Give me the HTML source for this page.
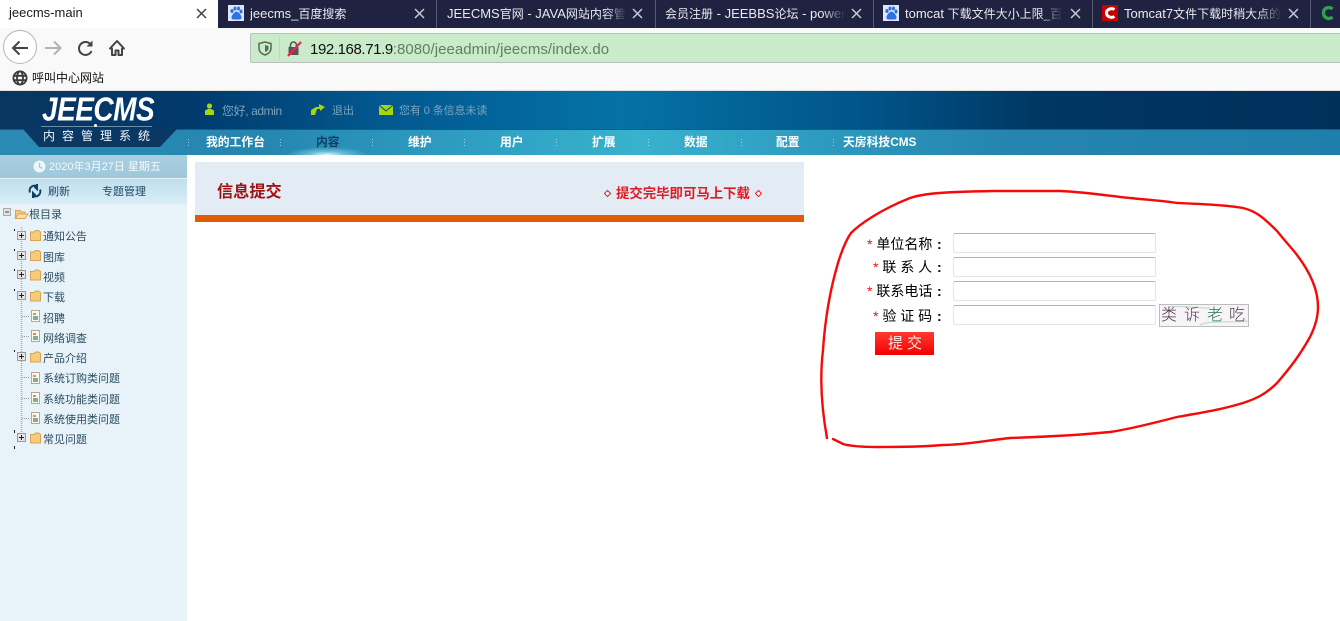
<!DOCTYPE html>
<html><head><meta charset="utf-8"><style>
html,body{margin:0;padding:0;width:1340px;height:621px;overflow:hidden;background:#fff}
body{position:relative;font-family:"Liberation Sans","Noto Sans CJK SC",sans-serif}
.a,.t{position:absolute;white-space:nowrap}
.t{line-height:16px}
svg{position:absolute;overflow:visible}
.tab{position:absolute;top:0;height:28px;overflow:hidden;color:#e9e9ef;font-size:13px;line-height:27px;white-space:nowrap;background:#1f2240}
.tab b{font-weight:normal;font-size:12px}
.fade{position:absolute;top:0;width:22px;height:28px;background:linear-gradient(90deg,rgba(31,34,64,0),#1f2240)}
.div{position:absolute;top:0;width:1px;height:28px;background:#5a5b72}
.tree{position:absolute;left:43px;font-size:11px;line-height:14px;color:#2c4d60;white-space:nowrap}
.nav{position:absolute;top:134px;font-size:11.8px;font-weight:bold;line-height:16px;color:#fff;white-space:nowrap}
.sep{position:absolute;top:139px;width:1px;height:7px;opacity:.7;background:repeating-linear-gradient(180deg,#cfeaf3 0 1px,transparent 1px 3px)}
.inp{position:absolute;left:953px;width:201px;height:18px;border:1px solid #e2e5ea;border-top-color:#b4b4b4;border-radius:2px;background:#fff}
.lb{position:absolute;font-size:14px;line-height:18px;color:#000;white-space:nowrap}
.co{position:absolute;left:937px;font-size:14px;line-height:18px;font-weight:bold;color:#000}
.st{color:#f01010}
.cp{position:absolute;top:1px;font-size:16px;line-height:20px;font-weight:300}
</style></head><body>

<!-- tab strip -->
<div class="a" style="left:0;top:0;width:1340px;height:28px;background:#1f2240"></div>
<div class="a" style="left:0;top:0;width:218px;height:28px;background:#fff"></div>
<div class="t" style="left:9px;top:5px;font-size:13px;color:#1a1a1a">jeecms-main</div>
<svg style="left:196px;top:8px" width="11" height="11"><path d="M1 1L10 10M10 1L1 10" stroke="#444" stroke-width="1.5"/></svg>

<div class="tab" style="left:250px;width:160px">jeecms_<b>百度搜索</b></div>
<div class="tab" style="left:447px;width:180px">JEECMS<b>官网</b> - JAVA<b>网站内容管理系统</b><div class="fade" style="right:0"></div></div>
<div class="tab" style="left:665px;width:180px"><b>会员注册</b> - JEEBBS<b>论坛</b> - powered by<div class="fade" style="right:0"></div></div>
<div class="tab" style="left:905px;width:158px">tomcat <b>下载文件大小上限_百度搜索</b><div class="fade" style="right:0"></div></div>
<div class="tab" style="left:1124px;width:158px">Tomcat7<b>文件下载时稍大点的就</b><div class="fade" style="right:0"></div></div>
<div class="div" style="left:436px"></div><div class="div" style="left:655px"></div><div class="div" style="left:873px"></div><div class="div" style="left:1092px"></div><div class="div" style="left:1310px"></div>

<svg style="left:414px;top:8px" width="11" height="11"><path d="M1 1L10 10M10 1L1 10" stroke="#c9c9d4" stroke-width="1.5"/></svg>
<svg style="left:632px;top:8px" width="11" height="11"><path d="M1 1L10 10M10 1L1 10" stroke="#c9c9d4" stroke-width="1.5"/></svg>
<svg style="left:851px;top:8px" width="11" height="11"><path d="M1 1L10 10M10 1L1 10" stroke="#c9c9d4" stroke-width="1.5"/></svg>
<svg style="left:1070px;top:8px" width="11" height="11"><path d="M1 1L10 10M10 1L1 10" stroke="#c9c9d4" stroke-width="1.5"/></svg>
<svg style="left:1288px;top:8px" width="11" height="11"><path d="M1 1L10 10M10 1L1 10" stroke="#c9c9d4" stroke-width="1.5"/></svg>

<!-- favicons -->
<svg style="left:228px;top:5px" width="16" height="16"><rect width="16" height="16" fill="#fff"/><rect width="16" height="16" fill="#3c78e8" opacity=".18"/><g fill="#2f6fe6"><ellipse cx="4" cy="6" rx="1.6" ry="2"/><ellipse cx="7" cy="3.5" rx="1.5" ry="2"/><ellipse cx="10.5" cy="3.5" rx="1.5" ry="2"/><ellipse cx="13" cy="6.5" rx="1.5" ry="2"/><path d="M8.5 6.5C6 7 3 11 3.5 13C4 15 7 14.5 8.5 14.5C10 14.5 13 15 13.5 13C14 11 11 7 8.5 6.5Z"/></g></svg>
<svg style="left:883px;top:5px" width="16" height="16"><rect width="16" height="16" fill="#fff"/><rect width="16" height="16" fill="#3c78e8" opacity=".18"/><g fill="#2f6fe6"><ellipse cx="4" cy="6" rx="1.6" ry="2"/><ellipse cx="7" cy="3.5" rx="1.5" ry="2"/><ellipse cx="10.5" cy="3.5" rx="1.5" ry="2"/><ellipse cx="13" cy="6.5" rx="1.5" ry="2"/><path d="M8.5 6.5C6 7 3 11 3.5 13C4 15 7 14.5 8.5 14.5C10 14.5 13 15 13.5 13C14 11 11 7 8.5 6.5Z"/></g></svg>
<svg style="left:1102px;top:5px" width="16" height="16"><rect width="16" height="16" fill="#c80000"/><path d="M12.5 4.500C9 2.500 4.500 4.500 4.500 8C4.500 11.500 9 13.500 12.500 11.500" fill="none" stroke="#fff" stroke-width="3"/></svg>
<svg style="left:1321px;top:5px" width="14" height="16"><path d="M11.5 4C8 1 2.5 3 2.5 8C2.5 13 8 15 11.5 12" fill="none" stroke="#2aa34a" stroke-width="3.4"/></svg>

<!-- toolbar -->
<div class="a" style="left:0;top:28px;width:1340px;height:62px;background:#f9f9fa"></div>
<div class="a" style="left:250px;top:33px;width:1090px;height:28px;background:#c9ebca;border-top:1px solid #bdbdbd;border-bottom:1px solid #bdbdbd;border-left:1px solid #bdbdbd;border-radius:2px 0 0 2px"></div>
<div class="a" style="left:279px;top:36px;width:1px;height:24px;background:#b9d9ba"></div>

<div class="a" style="left:3px;top:30px;width:32px;height:32px;border:1px solid #b5b5b5;border-radius:50%;background:#fff"></div>
<svg style="left:0;top:28px" width="130" height="40">
<path d="M28 20H13M19.5 13.5L13 20L19.5 26.5" fill="none" stroke="#444" stroke-width="2"/>
<path d="M45 20H60M54 13.5L60.5 20L54 26.5" fill="none" stroke="#b4b4b4" stroke-width="2"/>
<path d="M91 17A6.5 6.5 0 1 0 91.5 23" fill="none" stroke="#444" stroke-width="2"/><path d="M92.5 12.5V18.5H86.5Z" fill="#444"/>
<path d="M117 13L110 20.5H112V27H115.5V22.5H118.5V27H122V20.5H124Z" fill="none" stroke="#444" stroke-width="2" stroke-linejoin="round"/>
</svg>
<svg style="left:258px;top:41px" width="14" height="15"><path d="M7 1L13 2.500V7C13 11 10 13 7 14C4 13 1 11 1 7V2.500Z" fill="none" stroke="#5a6a5a" stroke-width="1.5"/><path d="M7 4L10.500 5V7.500C10.500 9.500 8.500 10.500 7 11Z" fill="#5a6a5a"/></svg>
<svg style="left:287px;top:41px" width="15" height="15"><rect x="1.500" y="6" width="10" height="8" fill="#555"/><path d="M3.500 6V4A3 3 0 0 1 9.500 4V6" fill="none" stroke="#555" stroke-width="1.6"/><path d="M1 15L14 1" stroke="#e8254a" stroke-width="2.2"/></svg>
<div class="t" style="left:310px;top:41px;font-size:15px;line-height:18px;color:#5f7f62;letter-spacing:.04px"><span style="color:#111;letter-spacing:-.4px">192.168.71.9</span>:8080/jeeadmin/jeecms/index.do</div>

<svg style="left:12px;top:70px" width="16" height="16"><g fill="none" stroke="#3a3a3a" stroke-width="1.8"><circle cx="8" cy="8" r="6.600"/><ellipse cx="8" cy="8" rx="3" ry="6.600"/><path d="M1.500 5.800H14.500M1.500 10.200H14.500"/></g></svg>
<div class="t" style="left:32px;top:70px;font-size:12px;color:#111">呼叫中心网站</div>
<div class="a" style="left:0;top:90px;width:1340px;height:1px;background:#e0e0e0"></div>

<!-- header -->
<div class="a" style="left:0;top:91px;width:1340px;height:39px;background:linear-gradient(90deg,#0a3560 0,#013a6c 190px,#02588f 380px,#0472a6 620px,#01558a 860px,#003763 1040px,#002f5c 1340px)"></div>
<div class="a" style="left:0;top:129px;width:1340px;height:1px;background:#0d5f8e"></div>
<div class="a" style="left:0;top:130px;width:1340px;height:25px;background:linear-gradient(90deg,#2a8ab4 0,#2586b0 260px,#2f9fc2 480px,#38b2ce 640px,#2f9dc1 800px,#2585b0 1000px,#1f7fac 1340px)"></div>
<svg style="left:0;top:129px" width="190" height="19"><path d="M23 0L39 18H160L177 0Z" fill="#0b3763"/></svg>
<div class="a" style="left:286px;top:147px;width:82px;height:8px;background:radial-gradient(ellipse 41px 8px at 50% 100%,#e6f6fb 0,rgba(150,215,235,.6) 45%,rgba(60,150,190,0) 100%)"></div>

<div class="a" style="left:42px;top:92px;font-size:28px;line-height:36px;font-weight:bold;font-style:italic;color:#fff;letter-spacing:-.5px;transform:scaleY(1.18)">JEECMS</div>
<div class="a" style="left:41px;top:126px;width:111px;height:1px;background:#6d8eaa"></div>
<div class="a" style="left:94px;top:124px;width:3px;height:3px;background:#fff;border-radius:50%"></div>
<div class="a" style="left:43px;top:128px;font-size:12px;line-height:16px;color:#f0f6fa;letter-spacing:7px">内容管理系统</div>

<svg style="left:203px;top:103px" width="13" height="13"><circle cx="6.500" cy="3" r="2.600" fill="#a6d60e"/><path d="M2 12V7.500L5 6H8L11 7.500V12Z" fill="#a6d60e"/></svg>
<div class="t" style="left:222px;top:103px;font-size:12px;color:#7ba3bc;letter-spacing:-.4px">您好, admin</div>
<svg style="left:311px;top:103px" width="15" height="13"><path d="M0 7L5 4H8V1L14 4L9 8V6H6L4 12L0 12Z" fill="#a6d60e"/></svg>
<div class="t" style="left:332px;top:103px;font-size:11px;color:#7ba3bc">退出</div>
<svg style="left:379px;top:105px" width="14" height="10"><rect width="14" height="10" fill="#a6d60e"/><path d="M0 0L7 6L14 0" fill="none" stroke="#05507f" stroke-width="1"/></svg>
<div class="t" style="left:399px;top:103px;font-size:11px;color:#7ba3bc;letter-spacing:-.1px">您有 0 条信息未读</div>

<div class="nav" style="left:206px;">我的工作台</div>
<div class="nav" style="left:316px;color:#123e68">内容</div>
<div class="nav" style="left:408px">维护</div>
<div class="nav" style="left:500px">用户</div>
<div class="nav" style="left:592px">扩展</div>
<div class="nav" style="left:684px">数据</div>
<div class="nav" style="left:776px">配置</div>
<div class="nav" style="left:843px">天房科技CMS</div>
<div class="sep" style="left:188px"></div><div class="sep" style="left:280px"></div><div class="sep" style="left:372px"></div><div class="sep" style="left:464px"></div><div class="sep" style="left:556px"></div><div class="sep" style="left:648px"></div><div class="sep" style="left:741px"></div><div class="sep" style="left:833px"></div>

<!-- sidebar -->
<div class="a" style="left:0;top:155px;width:187px;height:466px;background:#e7f3f9"></div>
<div class="a" style="left:0;top:155px;width:187px;height:23px;background:linear-gradient(180deg,#a9cfe0,#9fc7da)"></div>
<div class="a" style="left:0;top:178px;width:187px;height:1px;background:#e4f2f8"></div>
<div class="a" style="left:0;top:179px;width:187px;height:25px;background:linear-gradient(180deg,#bfdfec,#d9eef6)"></div>
<svg style="left:33px;top:160px" width="13" height="13"><circle cx="6.500" cy="6.500" r="6" fill="#eef6fa"/><path d="M6.500 3V7L9.500 8.500" fill="none" stroke="#9fc7da" stroke-width="1.2"/></svg>
<div class="t" style="left:49px;top:159px;font-size:11px;color:#f4fafd">2020年3月27日 星期五</div>
<svg style="left:28px;top:184px" width="14" height="14"><path d="M2 8.500A5 5 0 0 1 9.500 2.500M9 0V5L6.500 2.500M12 5.500A5 5 0 0 1 4.500 11.500M5 14V9L7.500 11.500" fill="none" stroke="#0f3d66" stroke-width="2"/></svg>
<div class="t" style="left:48px;top:184px;font-size:11px;color:#20486a">刷新</div>
<div class="t" style="left:102px;top:184px;font-size:11px;color:#20486a">专题管理</div>

<svg style="left:0;top:200px" width="50" height="250">
<path d="M21.500 27V233" stroke="#aaa" stroke-width="1.500" stroke-dasharray="1 1"/>
<g fill="none" stroke="#999" stroke-dasharray="1 1"><path d="M22 116.500H30M22 136.500H30M22 177.500H30M22 198.500H30M22 218.500H30"/></g>
<g fill="#222"><rect x="14" y="29" width="1" height="2"/><rect x="14" y="49" width="1" height="2"/><rect x="14" y="69" width="1" height="2"/><rect x="14" y="89" width="1" height="2"/><rect x="14" y="150" width="1" height="2"/><rect x="14" y="230" width="1" height="3"/><rect x="14" y="246" width="1" height="3"/></g>
<!-- root -->
<rect x="3.500" y="8.500" width="7" height="7" fill="#e2e2e2" stroke="#aaa"/><path d="M5 12H9" stroke="#444"/>
<path d="M15.500 18.500V10.500H20L21 12H25V18.500Z" fill="#f3c877" stroke="#d9a354"/><path d="M15.500 18.500L18 14H28L25 18.500Z" fill="#fae3ab" stroke="#d9a354"/>
<!-- plus boxes -->
<g fill="#e4e4e4" stroke="#999"><rect x="17.500" y="31.500" width="8" height="8"/><rect x="17.500" y="51.500" width="8" height="8"/><rect x="17.500" y="70.500" width="8" height="8"/><rect x="17.500" y="91.500" width="8" height="8"/><rect x="17.500" y="152.500" width="8" height="8"/><rect x="17.500" y="233.500" width="8" height="8"/></g>
<g stroke="#222"><path d="M19 35.500H24M21.500 33V38M19 55.500H24M21.500 53V58M19 74.500H24M21.500 72V77M19 95.500H24M21.500 93V98M19 156.500H24M21.500 154V159M19 237.500H24M21.500 235V240"/></g>
<!-- folders -->
<g fill="#f5cb7c" stroke="#d9a354"><path d="M30.500 32H34L35.500 30.500H38.500L40.500 32V40.500H30.500Z"/><path d="M30.500 52H34L35.500 50.500H38.500L40.500 52V60.500H30.500Z"/><path d="M30.500 71.500H34L35.500 70H38.500L40.500 71.500V80H30.500Z"/><path d="M30.500 92.500H34L35.500 91H38.500L40.500 92.500V101H30.500Z"/><path d="M30.500 153.500H34L35.500 152H38.500L40.500 153.500V162H30.500Z"/><path d="M30.500 234.500H34L35.500 233H38.500L40.500 234.500V243H30.500Z"/></g>
<!-- files -->
<g fill="#fbf8ee" stroke="#b9a98c"><rect x="31.500" y="110.500" width="8" height="11"/><rect x="31.500" y="130.500" width="8" height="11"/><rect x="31.500" y="172.500" width="8" height="11"/><rect x="31.500" y="192.500" width="8" height="11"/><rect x="31.500" y="212.500" width="8" height="11"/></g>
<g fill="#7fae92"><rect x="33" y="116" width="5" height="4"/><rect x="33" y="136" width="5" height="4"/><rect x="33" y="178" width="5" height="4"/><rect x="33" y="198" width="5" height="4"/><rect x="33" y="218" width="5" height="4"/></g>
<g fill="#d98a80"><rect x="33" y="113" width="3" height="2"/><rect x="33" y="133" width="3" height="2"/><rect x="33" y="175" width="3" height="2"/><rect x="33" y="195" width="3" height="2"/><rect x="33" y="215" width="3" height="2"/></g>
</svg>
<div class="tree" style="left:29px;top:208px">根目录</div>
<div class="tree" style="top:230px">通知公告</div>
<div class="tree" style="top:251px">图库</div>
<div class="tree" style="top:271px">视频</div>
<div class="tree" style="top:291px">下载</div>
<div class="tree" style="top:312px">招聘</div>
<div class="tree" style="top:332px">网络调查</div>
<div class="tree" style="top:352px">产品介绍</div>
<div class="tree" style="top:372px">系统订购类问题</div>
<div class="tree" style="top:393px">系统功能类问题</div>
<div class="tree" style="top:413px">系统使用类问题</div>
<div class="tree" style="top:433px">常见问题</div>

<!-- main -->
<div class="a" style="left:195px;top:162px;width:609px;height:53px;background:#e3ebf5"></div>
<div class="a" style="left:195px;top:215px;width:609px;height:7px;background:#e25a06"></div>
<div class="a" style="left:217px;top:182px;font-size:16.2px;line-height:20px;font-weight:bold;color:#a01212">信息提交</div>
<svg style="left:604px;top:189px" width="7" height="9"><path d="M3.500 1.500L6.500 4.500L3.500 7.500L.5 4.500Z" fill="#fff" stroke="#e0202a"/></svg>
<div class="a" style="left:616px;top:185px;font-size:13.4px;line-height:18px;font-weight:bold;color:#e01b20">提交完毕即可马上下载</div>
<svg style="left:755px;top:189px" width="7" height="9"><path d="M3.500 1.500L6.500 4.500L3.500 7.500L.5 4.500Z" fill="#fff" stroke="#e0202a"/></svg>

<!-- form -->
<div class="lb" style="left:867px;top:235px"><span class="st">*</span> 单位名称</div>
<div class="lb" style="left:873px;top:258px"><span class="st">*</span> 联 系 人</div>
<div class="lb" style="left:867px;top:282px"><span class="st">*</span> 联系电话</div>
<div class="lb" style="left:873px;top:307px"><span class="st">*</span> 验 证 码</div>
<div class="co" style="top:235px">:</div>
<div class="co" style="top:258px">:</div>
<div class="co" style="top:282px">:</div>
<div class="co" style="top:307px">:</div>
<div class="inp" style="top:233px"></div>
<div class="inp" style="top:257px"></div>
<div class="inp" style="top:281px"></div>
<div class="inp" style="top:305px"></div>
<div class="a" style="left:1159px;top:304px;width:88px;height:21px;border:1px solid #bcbcbc;background:#f6f4f6;overflow:hidden">
<svg style="left:0;top:0" width="88" height="21"><path d="M8 2C25 0 40 4 50 3M40 20C50 15 70 18 88 16" fill="none" stroke="#b8d8c8"/></svg>
<div class="cp" style="left:1px;color:#4a3048">类</div>
<div class="cp" style="left:24px;color:#5a4060">诉</div>
<div class="cp" style="left:47px;color:#2f6f58">老</div>
<div class="cp" style="left:69px;color:#444">吃</div>
</div>
<div class="a" style="left:875px;top:332px;width:59px;height:23px;background:linear-gradient(180deg,#ff3a30,#f40000);color:#fde8e6;font-size:15px;line-height:23px;letter-spacing:4px;text-indent:13px">提交</div>

<!-- hand-drawn annotation -->
<svg style="left:0;top:0" width="1340" height="621"><path d="M827 438C821 405 820 375 823 350C825 320 830 290 838 263C842 250 846 240 851 233C860 224 880 210 910 198C925 193 945 192 993 191L1060 191C1085 192 1110 196 1130 198C1150 200 1165 201 1177 203C1200 204 1225 205 1243 208C1255 211 1262 216 1277 231C1285 241 1295 252 1297 255C1310 272 1318 290 1318 307C1318 320 1312 333 1310 337C1300 355 1290 368 1277 383C1265 395 1255 399 1243 403C1220 410 1200 413 1177 417C1150 424 1125 430 1110 432C1080 435 1040 437 1010 438C990 440 965 445 943 445C920 447 890 447 877 447C860 447 850 446 843 444L833 439" fill="none" stroke="#f50a0a" stroke-width="2.4" stroke-linecap="round"/></svg>
</body></html>
